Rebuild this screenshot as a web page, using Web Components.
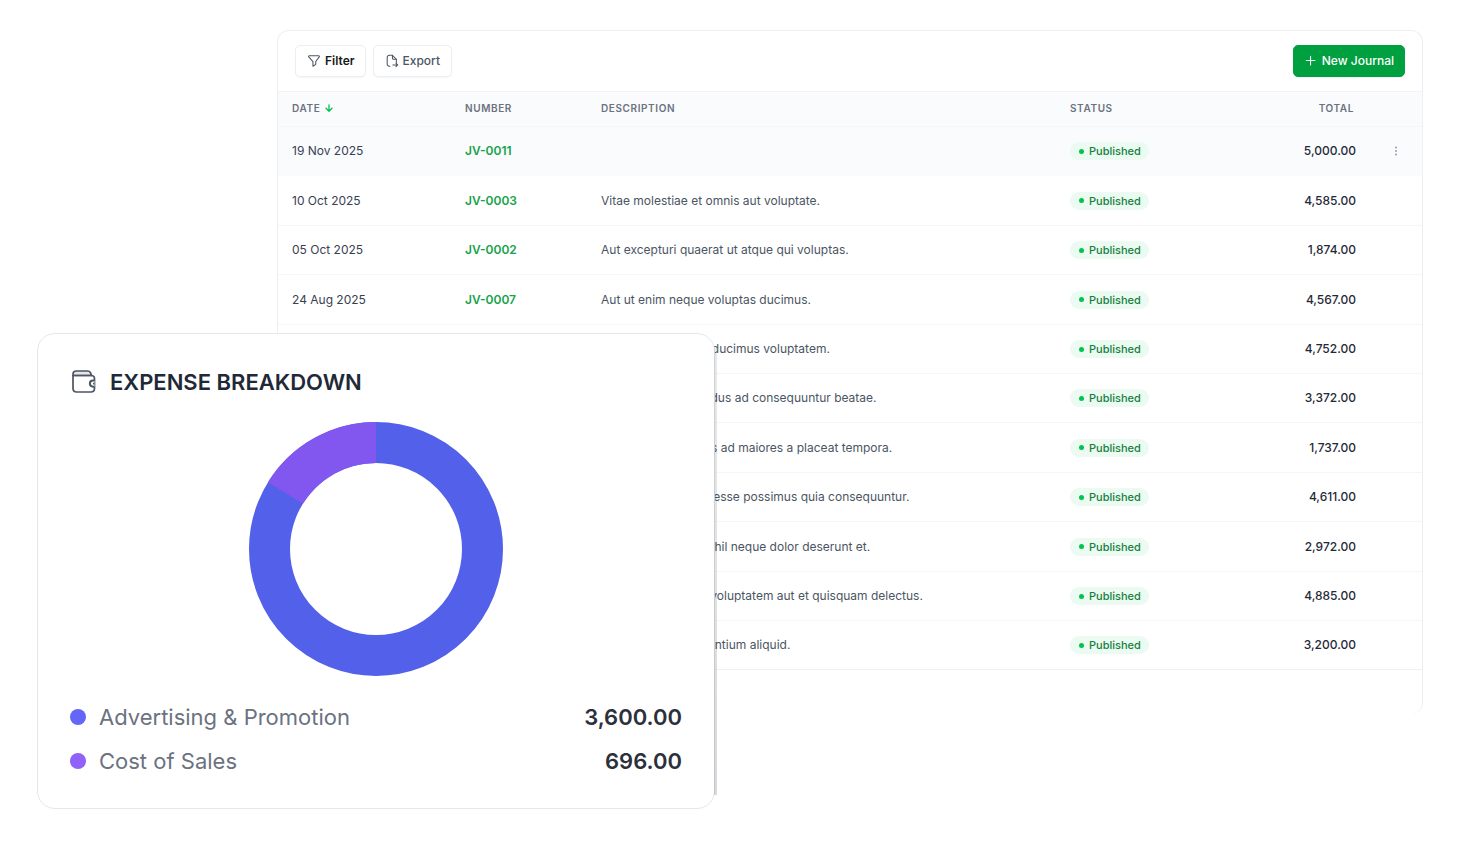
<!DOCTYPE html>
<html lang="en">
<head>
<meta charset="utf-8">
<meta name="viewport" content="width=device-width, initial-scale=1">
<title>Journals</title>
<style>
  body { margin: 0; background: #fff; font-family: Inter, "Liberation Sans", sans-serif; color: #1f2937; }
</style>
</head>
<body>
<app-stage>
  <journal-panel slot="panel">
    <tool-button slot="start" icon="filter" strong>Filter</tool-button>
    <tool-button slot="start" icon="export">Export</tool-button>
    <tool-button slot="end" icon="plus" primary>New Journal</tool-button>
    <journal-table></journal-table>
  </journal-panel>
  <expense-card slot="card">
    <span slot="title">EXPENSE BREAKDOWN</span>
    <legend-row color="#6366f6"><span slot="label">Advertising &amp; Promotion</span>3,600.00</legend-row>
    <legend-row color="#8f62fa"><span slot="label">Cost of Sales</span>696.00</legend-row>
  </expense-card>
</app-stage>

<script>
const define = (name, render) => customElements.define(name, class extends HTMLElement {
  connectedCallback() {
    if (this.shadowRoot) return;
    this.attachShadow({ mode: 'open' }).innerHTML = render(this);
  }
});

const icons = {
  filter: '<path d="M2.600 2h10.800c.7 0 1 .8.6 1.300L10 8.600v3.200l-3.200 2.200V8.600L2 3.300c-.4-.5-.1-1.300.6-1.300z"/>',
  export: '<path d="M5.500 14H5a2.500 2.500 0 0 1-2.500-2.500V4A2.500 2.500 0 0 1 5 1.500h3.500L13 6v4"/><path d="M8.500 1.500v3A1.500 1.500 0 0 0 10 6h3M9 12.500h5.500M12.500 10.500l2 2-2 2"/>',
  plus: '<path d="M7.500 2.500v10M2.500 7.500h10"/>'
};

define('app-stage', () => `
  <style>
    :host { display: block; }
    main { display: grid; grid-template-columns: 240px 438px minmax(0, 1fr); padding: 30px 34px 34px 37px; align-items: start; }
    .panel { grid-area: 1 / 2 / 2 / 4; min-width: 0; }
    .card { grid-area: 1 / 1 / 2 / 3; margin-top: 303px; z-index: 1; }
  </style>
  <main>
    <div class="panel"><slot name="panel"></slot></div>
    <div class="card"><slot name="card"></slot></div>
  </main>`);

define('journal-panel', () => `
  <style>
    :host { display: block; border: 1px solid #eceef1; border-bottom: 0; border-radius: 12px; padding-bottom: 44px; background: #fff; }
    header { display: flex; justify-content: space-between; padding: 14px 17px; }
    .group { display: flex; gap: 7px; }
  </style>
  <header>
    <div class="group"><slot name="start"></slot></div>
    <div class="group"><slot name="end"></slot></div>
  </header>
  <slot></slot>`);

define('tool-button', el => `
  <style>
    :host { display: block; }
    button { display: flex; align-items: center; gap: 4px; height: 32px; padding: 0 11px; border: 1px solid #eceef1; border-radius: 5px; background: #fff; color: #4b5563; font: 500 12px/16px Inter, sans-serif; box-shadow: 0 1px 1px #0000000a; cursor: pointer; }
    :host([strong]) button { color: #18181b; font-weight: 600; padding: 0 10px 0 11px; }
    :host([primary]) button { background: #00a040; border-color: #00a040; color: #fff; padding: 0 10px; }
    svg { width: 14px; height: 14px; fill: none; stroke: currentColor; stroke-width: 1.200; stroke-linecap: round; stroke-linejoin: round; }
    :host([strong]) svg { stroke: #4b5563; }
  </style>
  <button type="button"><svg viewBox="0 0 16 16" aria-hidden="true">${icons[el.getAttribute('icon')]}</svg><slot></slot></button>`);

define('status-badge', () => `
  <style>
    :host { display: inline-flex; align-items: center; gap: 5px; height: 18px; padding: 0 8px 0 9px; border-radius: 9px; background: #ebfbf1; color: #15803d; font: 500 11px/16px Inter, sans-serif; vertical-align: middle; }
    i { width: 5px; height: 5px; border-radius: 50%; background: #00c350; }
  </style>
  <i></i><slot></slot>`);

const journals = [
  ['19 Nov 2025', 'JV-0011', '', '5,000.00'],
  ['10 Oct 2025', 'JV-0003', 'Vitae molestiae et omnis aut voluptate.', '4,585.00'],
  ['05 Oct 2025', 'JV-0002', 'Aut excepturi quaerat ut atque qui voluptas.', '1,874.00'],
  ['24 Aug 2025', 'JV-0007', 'Aut ut enim neque voluptas ducimus.', '4,567.00'],
  ['', '', 'Quasi dolorum quo ducimus voluptatem.', '4,752.00'],
  ['', '', 'Autem eos repellendus ad consequuntur beatae.', '3,372.00'],
  ['', '', 'Sed est omnis facilis ad maiores a placeat tempora.', '1,737.00'],
  ['', '', 'Rerum voluptas est esse possimus quia consequuntur.', '4,611.00'],
  ['', '', 'Eos sunt voluptas nihil neque dolor deserunt et.', '2,972.00'],
  ['', '', 'Eum aut dolores et voluptatem aut et quisquam delectus.', '4,885.00'],
  ['', '', 'Officia culpa praesentium aliquid.', '3,200.00']
];

define('journal-table', () => `
  <style>
    :host { display: block; }
    table { width: 100%; table-layout: fixed; border-collapse: separate; border-spacing: 0; font-size: 12px; line-height: 16px; }
    .date { width: 173px; } .number { width: 136px; } .status { width: 164px; } .total { width: 150px; } .more { width: 52px; }
    th, td { box-sizing: border-box; padding: 0 0 0 14px; text-align: left; white-space: nowrap; border-bottom: 1px solid #f5f6f8; }
    th { height: 36px; padding-bottom: 2px; font-size: 10px; font-weight: 600; color: #6b7280; background: #fafbfd; border-top: 1px solid #f1f3f6; letter-spacing: 0.06em; }
    th svg { width: 8px; height: 8px; margin-left: 5px; fill: none; stroke: #00c350; stroke-width: 1.300; stroke-linecap: round; stroke-linejoin: round; }
    td { height: 49px; color: #4b5563; }
    tr:nth-child(5n+2) td, tr:nth-child(5n+4) td { height: 50px; }
    tbody tr:first-child td { background: #fafbfd; border-color: #fafbfd; }
    tbody tr:last-child td { border-color: #eff1f4; }
    td:first-child { color: #374151; }
    td a { color: #16a34a; font-weight: 600; text-decoration: none; }
    th.right { text-align: right; padding: 0 16px 2px 0; }
    td.right { text-align: right; padding: 0 14px 0 0; color: #1f2937; font-weight: 500; }
    td:last-child { padding-left: 20px; }
    button { display: block; width: 12px; height: 16px; padding: 0; border: 0; background: none; cursor: pointer; }
    button svg { display: block; width: 12px; height: 16px; fill: #8b93a1; }
  </style>
  <table>
    <colgroup><col class="date"><col class="number"><col><col class="status"><col class="total"><col class="more"></colgroup>
    <thead><tr>
      <th scope="col">DATE<svg viewBox="0 0 8 8" aria-hidden="true"><path d="M4 .8v6.400M1 4.300l3 3 3-3"/></svg></th>
      <th scope="col">NUMBER</th><th scope="col">DESCRIPTION</th><th scope="col">STATUS</th><th scope="col" class="right">TOTAL</th><th></th>
    </tr></thead>
    <tbody>${journals.map(([date, number, text, total], i) => `
      <tr><td>${date}</td><td>${number ? `<a href="#${number}">${number}</a>` : ''}</td><td>${text}</td>
      <td><status-badge>Published</status-badge></td><td class="right">${total}</td>
      <td>${i ? '' : '<button type="button" aria-label="Row actions"><svg viewBox="0 0 12 16"><circle cx="6" cy="4.500" r=".9"/><circle cx="6" cy="8" r=".9"/><circle cx="6" cy="11.500" r=".9"/></svg></button>'}</td></tr>`).join('')}
    </tbody>
  </table>`);

define('expense-card', () => `
  <style>
    :host { display: block; position: relative; box-sizing: border-box; padding: 32px 32px 25px; border: 1px solid #e5e7ea; border-radius: 18px; background: #fff; }
    :host::after { content: ""; position: absolute; top: 14px; bottom: 13px; right: -3px; width: 3px; background: linear-gradient(#1118271a, #11182720 50%, #1118272a); }
    h2 { display: flex; align-items: center; gap: 14px; height: 32px; margin: 0; padding-left: 2px; font-size: 22px; line-height: 32px; font-weight: 600; color: #1f2937; }
    h2 svg { width: 24px; height: 24px; fill: none; stroke: #4b5563; stroke-width: 1.700; stroke-linejoin: round; }
    .donut { display: block; width: 254px; height: 254px; margin: 24px auto 19px; fill: none; stroke-width: 41; }
  </style>
  <h2>
    <svg viewBox="0 0 24 24" aria-hidden="true">
      <path fill="#e4e6e9" d="M1 5.500V4.300C1 2 2.300 1 4.300 1H15.500c1.500 0 2.500.7 3.100 1.900L19.500 5.500z"/>
      <path d="M1 5.500h18c2.100 0 3.500 1.300 3.500 3.300v9.500c0 2.200-1.400 3.700-3.600 3.700H4.600C2.400 22 1 20.500 1 18.300z"/>
      <path fill="#fff" stroke-width="2" d="M22.500 10.500h-1.500a3.100 3.100 0 0 0 0 6.200h1.500"/>
      <path d="M21 13.600h1.500"/>
    </svg>
    <slot name="title"></slot>
  </h2>
  <svg class="donut" viewBox="0 0 254 254" role="img" aria-label="Expense share by account">
    <circle cx="127" cy="127" r="106.500" stroke="#5260ea"/>
    <circle cx="127" cy="127" r="106.500" stroke="#8257ef" pathLength="4296" stroke-dasharray="696 3600" stroke-dashoffset="-3600" transform="rotate(-90 127 127)"/>
  </svg>
  <slot></slot>`);

define('legend-row', el => `
  <style>
    :host { display: flex; align-items: center; height: 44px; font-size: 22px; line-height: 28px; font-weight: 600; color: #2b303b; }
    i { width: 16px; height: 16px; margin-right: 13px; border-radius: 50%; background: ${el.getAttribute('color')}; }
    .label { flex: 1; color: #6b7280; font-weight: 400; }
  </style>
  <i></i><span class="label"><slot name="label"></slot></span><span><slot></slot></span>`);
</script>
</body>
</html>
